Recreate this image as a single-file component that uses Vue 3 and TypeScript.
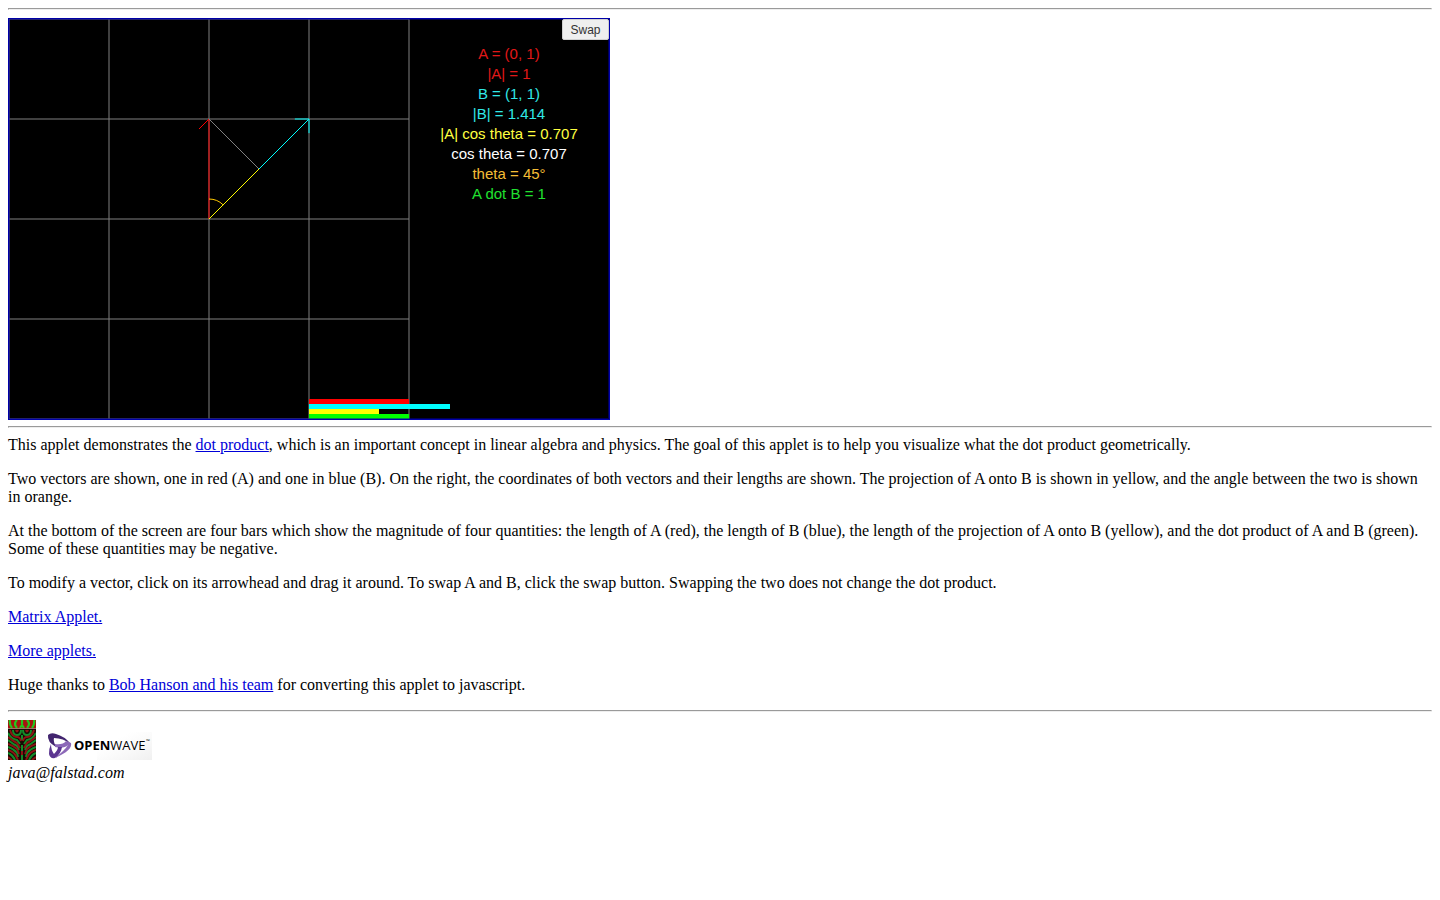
<script setup lang="ts">
import { computed, ref } from 'vue'

interface Vec { x: number; y: number }

const a = ref<Vec>({ x: 0, y: 1 })
const b = ref<Vec>({ x: 1, y: 1 })
const unit = 100
const centre = 200

const fmt = (n: number): string => String(Math.round(n * 1000) / 1000)
const len = (v: Vec): number => Math.hypot(v.x, v.y)
const px = (v: Vec): Vec => ({ x: centre + v.x * unit, y: centre - v.y * unit })

const dot = computed(() => a.value.x * b.value.x + a.value.y * b.value.y)
const cos = computed(() => dot.value / (len(a.value) * len(b.value)))
const proj = computed(() => len(a.value) * cos.value)
const tipA = computed(() => px(a.value))
const tipB = computed(() => px(b.value))
const foot = computed(() => {
  const k = proj.value / len(b.value)
  return px({ x: b.value.x * k, y: b.value.y * k })
})

function head(v: Vec): string {
  const tip = px(v)
  const ux = v.x / len(v)
  const uy = -v.y / len(v)
  const wing = (s: number) => `${tip.x - 10 * ux - s * 10 * uy},${tip.y - 10 * uy + s * 10 * ux}`
  return `${wing(1)} ${tip.x},${tip.y} ${wing(-1)}`
}

const arc = computed(() => {
  const at = (v: Vec) => `${centre + (20 * v.x) / len(v)} ${centre - (20 * v.y) / len(v)}`
  const sweep = a.value.x * b.value.y - a.value.y * b.value.x < 0 ? 1 : 0
  return `M${at(a.value)}A20 20 0 0 ${sweep} ${at(b.value)}`
})

const readings = computed(() => [
  { tone: 'red', text: `A = (${a.value.x}, ${a.value.y})` },
  { tone: 'red', text: `|A| = ${fmt(len(a.value))}` },
  { tone: 'cyan', text: `B = (${b.value.x}, ${b.value.y})` },
  { tone: 'cyan', text: `|B| = ${fmt(len(b.value))}` },
  { tone: 'yellow', text: `|A| cos theta = ${fmt(proj.value)}` },
  { tone: 'white', text: `cos theta = ${fmt(cos.value)}` },
  { tone: 'orange', text: `theta = ${Math.round((Math.acos(cos.value) * 180) / Math.PI)}°` },
  { tone: 'green', text: `A dot B = ${fmt(dot.value)}` },
])

const bars = computed(() => [
  { color: '#f00', size: len(a.value) },
  { color: '#0ff', size: len(b.value) },
  { color: '#ff0', size: proj.value },
  { color: '#0f0', size: dot.value },
])

function swap(): void {
  const old = a.value
  a.value = b.value
  b.value = old
}
</script>

<template>
  <main class="page">
    <hr>
    <section class="applet" aria-label="Dot product applet">
      <svg class="plane" width="400" height="400" viewBox="0 0 400 400" fill="none">
        <g stroke="#808080">
          <path v-for="n in 5" :key="n" :d="`M${(n - 1) * 100} 0V400M0 ${(n - 1) * 100}H400`" />
        </g>
        <g stroke="#0ff">
          <line :x1="foot.x" :y1="foot.y" :x2="tipB.x" :y2="tipB.y" />
          <polyline :points="head(b)" />
        </g>
        <g stroke="#f00">
          <line :x1="centre" :y1="centre" :x2="tipA.x" :y2="tipA.y" />
          <polyline :points="head(a)" />
        </g>
        <line :x1="tipA.x" :y1="tipA.y" :x2="foot.x" :y2="foot.y" stroke="#808080" />
        <line :x1="centre" :y1="centre" :x2="foot.x" :y2="foot.y" stroke="#ff0" />
        <path :d="arc" stroke="#ffc800" />
        <rect
          v-for="(bar, i) in bars" :key="bar.color" x="300" :y="380 + i * 5"
          :width="Math.floor(Math.abs(bar.size) * unit)" height="5" :fill="bar.color"
        />
      </svg>
      <div class="readings">
        <div v-for="r in readings" :key="r.text" :class="r.tone">{{ r.text }}</div>
      </div>
      <button class="swap" type="button" @click="swap">Swap</button>
    </section>
    <hr class="below">
    <p class="intro">This applet demonstrates the <a href="#dot">dot product</a>, which is an important concept in linear algebra and physics. The goal of this applet is to help you visualize what the dot product geometrically.</p>
    <p>Two vectors are shown, one in red (A) and one in blue (B). On the right, the coordinates of both vectors and their lengths are shown. The projection of A onto B is shown in yellow, and the angle between the two is shown in orange.</p>
    <p>At the bottom of the screen are four bars which show the magnitude of four quantities: the length of A (red), the length of B (blue), the length of the projection of A onto B (yellow), and the dot product of A and B (green). Some of these quantities may be negative.</p>
    <p>To modify a vector, click on its arrowhead and drag it around. To swap A and B, click the swap button. Swapping the two does not change the dot product.</p>
    <p><a href="#matrix">Matrix Applet.</a></p>
    <p><a href="#more">More applets.</a></p>
    <p>Huge thanks to <a href="#team">Bob Hanson and his team</a> for converting this applet to javascript.</p>
    <hr class="end">
    <footer>
      <div class="logos">
        <svg width="28" height="40" viewBox="0 0 28 40" fill="none" aria-label="Ripple">
          <rect width="28" height="40" fill="#160a04" />
          <rect width="28" height="8" fill="#a81410" />
          <path d="M2 0Q1 4 4 8M9 0Q5 4 9 8M14 0V4M12 8L14 5L16 8M19 0Q23 4 19 8M26 0Q27 4 24 8" stroke="#22c81e" stroke-width="2.2" />
          <g stroke="#128c28" stroke-width="2">
            <path d="M5 10Q5 15 9 15Q13 15 13 10M15 10Q15 15 19 15Q23 15 23 10M14 15V20" />
            <path d="M0 13Q3 19 9 20L12 24M28 13Q25 19 19 20L16 24M0 20Q5 24 9 26L11 30M28 20Q23 24 19 26L17 30M0 27Q6 29 9 33L10 37M28 27Q22 29 19 33L18 37M0 33Q5 35 7 40M28 33Q23 35 21 40M14 25V31M14 35V40" />
          </g>
          <g stroke="#8c1414" stroke-width="2">
            <path d="M8 10Q9 13 10 10M18 10Q19 13 20 10M2 10Q4 17 9 17Q12 17 13 21M26 10Q24 17 19 17Q16 17 15 21" />
            <path d="M0 17Q5 21 9 23L12 28M28 17Q23 21 19 23L16 28M0 24Q6 26 9 29L11 34M28 24Q22 26 19 29L17 34M0 30Q6 32 8 36L10 40M28 30Q22 32 20 36L18 40M0 37L4 40M28 37L24 40M14 31V35" />
          </g>
          <path d="M0 8.5H28" stroke="#9c7468" />
        </svg>
        <svg class="openwave" width="105" height="28" viewBox="0 0 105 28">
          <defs>
            <linearGradient id="fade" x1="0" y1="0" x2="1" y2="1">
              <stop offset="0.3" stop-color="#f4f4f4" stop-opacity="0" />
              <stop offset="1" stop-color="#f0f0f0" />
            </linearGradient>
          </defs>
          <rect x="50" width="55" height="28" fill="url(#fade)" />
          <path fill="#42256f" d="M1 3Q4 0 9 2Q17 4 24 12Q16 6 7 6Q6 9 9 15Q0 10 1 3Z" />
          <path fill="#8c68b8" d="M24 11Q26 18 8 26Q18 18 21 13Q17 17 8 15L8 12Q16 13 19 9Z" />
          <path fill="#5b3591" d="M4 12Q4 18 7 22Q11 18 11 15H15Q14 22 8 26Q3 27 2 22Q2 16 4 12Z" />
          <text class="wordmark" x="27" y="18"><tspan class="strong">OPEN</tspan>WAVE</text>
          <text class="mark" x="99" y="11">™</text>
        </svg>
      </div>
      <address>java@falstad.com</address>
    </footer>
  </main>
</template>

<style scoped>
.page {
  padding: 8px;
  color: #000;
  font: 16px/18px "Liberation Serif", "Times New Roman", serif;
}
hr {
  margin: 0 0 8px;
  border: 1px solid;
  border-color: #9a9a9a #eee #eee #9a9a9a;
}
hr.below {
  margin-top: 6px;
}
hr.end {
  margin-top: 16px;
}
p {
  margin: 16px 0 0;
}
p.intro {
  margin-top: 0;
}
a {
  color: #0000d8;
}
.applet {
  position: relative;
  display: flex;
  width: fit-content;
  border: 1px solid #0000a8;
  background: #000;
  font-family: "Liberation Sans", Arial, sans-serif;
}
.applet::after {
  position: absolute;
  inset: -1px;
  border: 1px solid #0000a8;
  box-shadow: inset 0 0 0 1px rgba(0, 0, 168, 0.5);
  pointer-events: none;
  content: "";
}
.plane {
  display: block;
  overflow: visible;
}
.readings {
  width: 200px;
  padding-top: 25px;
  font-size: 15px;
  line-height: 20px;
  text-align: center;
}
.red { color: #e01818; }
.cyan { color: #30e8e8; }
.yellow { color: #ffff40; }
.white { color: #fff; }
.orange { color: #f5bd35; }
.green { color: #20e030; }
.swap {
  position: absolute;
  z-index: 1;
  top: 0;
  right: 0;
  width: 47px;
  height: 21px;
  padding: 0;
  border: 1px solid #d0d0d0;
  border-radius: 2px;
  background: #efefef;
  color: #333;
  font: 12px "Liberation Sans", Arial, sans-serif;
}
.logos {
  display: flex;
  align-items: flex-end;
  gap: 11px;
  padding-bottom: 4px;
}
.logos svg {
  display: block;
}
.wordmark {
  font: 13px "Open Sans", "Noto Sans", sans-serif;
}
.strong {
  font-weight: 700;
}
.mark {
  font: 5px "Open Sans", sans-serif;
}
address {
  font-style: italic;
}
</style>

<style>
body {
  background: #fff;
}
</style>
